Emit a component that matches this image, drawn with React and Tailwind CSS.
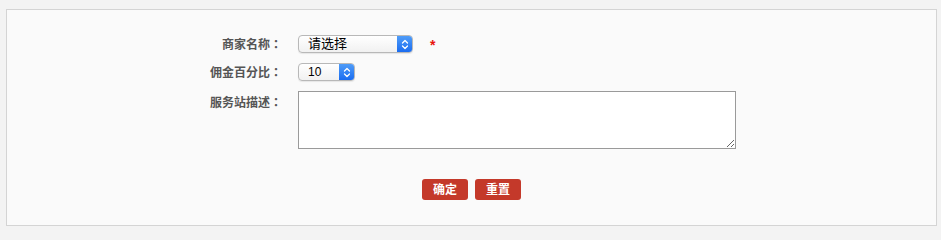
import React from "react";

function Chevrons() {
  return (
    <svg width="8" height="11" viewBox="0 0 8 11" fill="none">
      <path d="M1.5 4 L4 1.5 L6.5 4" stroke="white" strokeWidth="1.3" strokeLinecap="round" strokeLinejoin="round" />
      <path d="M1.5 7 L4 9.5 L6.5 7" stroke="white" strokeWidth="1.3" strokeLinecap="round" strokeLinejoin="round" />
    </svg>
  );
}

function Select({ width, text, textClass }) {
  return (
    <div
      className={`flex h-[18px] ${width} items-stretch overflow-hidden rounded-[4px] border border-[#b8b8b8] bg-gradient-to-b from-white to-[#f1f1f1] shadow-[0_1px_1px_rgba(0,0,0,0.08)]`}
    >
      <div className={`flex flex-1 items-center pl-[9px] text-black ${textClass}`}>{text}</div>
      <div className="flex w-[15px] items-center justify-center bg-gradient-to-b from-[#4f9cf8] to-[#1a6cf0]">
        <Chevrons />
      </div>
    </div>
  );
}

function Label({ text, className = "" }) {
  return (
    <div className={`w-[275px] text-right text-[12px] font-bold text-[#555] ${className}`}>
      {text}
      <span style={{ fontFamily: '"Noto Sans CJK TC", sans-serif' }}>：</span>
    </div>
  );
}

export default function App() {
  const font = { fontFamily: '"Liberation Sans", "Noto Sans CJK SC", sans-serif' };
  return (
    <div className="min-h-screen bg-[#f3f3f3] pl-[6px] pt-[9px]" style={font}>
      <div className="flex h-[217px] w-[931px] flex-col border border-[#d4d4d4] bg-[#fafafa] pt-[25px]">
        <div className="flex h-[18px] items-center">
          <Label text="商家名称" className="mt-[1px]" />
          <div className="ml-[16px] flex items-center">
            <Select width="w-[115px]" text="请选择" textClass="text-[13px]" />
            <span className="ml-[17px] mt-[3px] text-[14px] font-bold text-[#e8140c]">*</span>
          </div>
        </div>
        <div className="mt-[10px] flex h-[18px] items-center">
          <Label text="佣金百分比" className="mt-[1px]" />
          <div className="ml-[16px]">
            <Select width="w-[57px]" text="10" textClass="text-[12px]" />
          </div>
        </div>
        <div className="mt-[10px] flex items-start">
          <Label text="服务站描述" className="mt-[2px]" />
          <textarea
            className="ml-[16px] h-[58px] w-[438px] border border-[#9a9a9a] bg-white outline-none"
            defaultValue=""
          />
        </div>
        <div className="mt-[30px] flex justify-center gap-[7px]">
          <button className="h-[21px] w-[46px] rounded-[3px] bg-[#c4392a] text-[12px] font-bold text-white">确定</button>
          <button className="h-[21px] w-[46px] rounded-[3px] bg-[#c4392a] text-[12px] font-bold text-white">重置</button>
        </div>
      </div>
    </div>
  );
}
